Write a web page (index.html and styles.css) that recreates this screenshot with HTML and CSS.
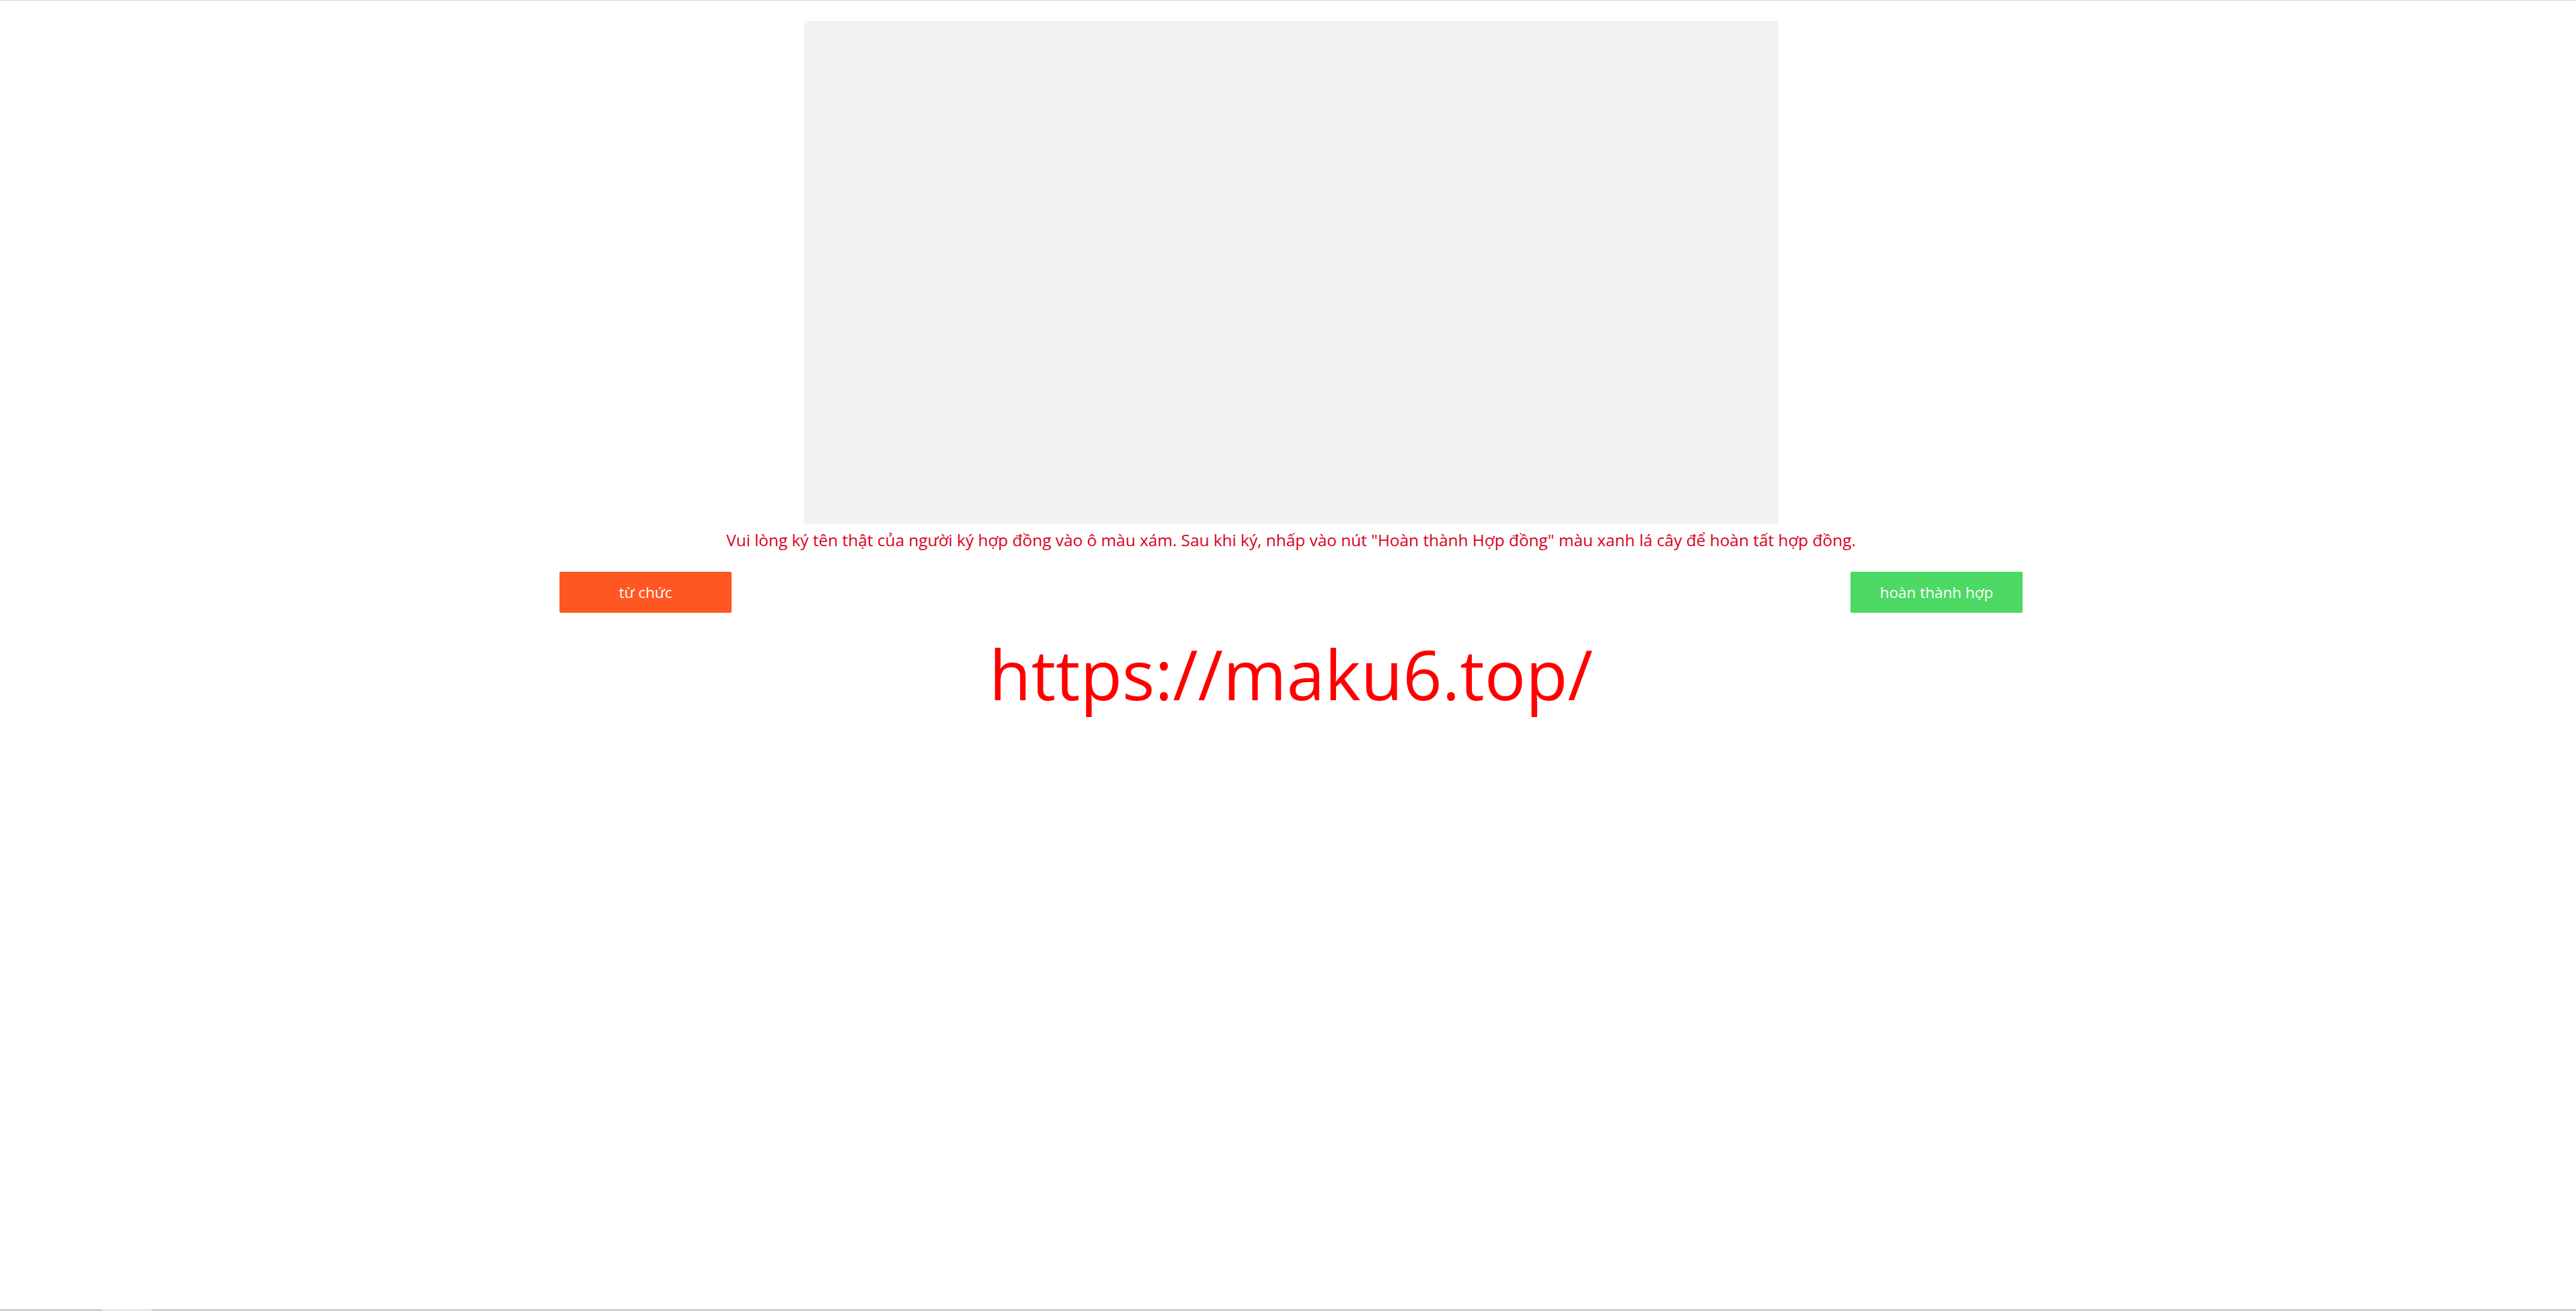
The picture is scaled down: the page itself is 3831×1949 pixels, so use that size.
FILE: index.html
```html
<!DOCTYPE html>
<html lang="vi">
<head>
<meta charset="utf-8">
<title>Ký hợp đồng</title>
<link rel="stylesheet" href="styles.css">
</head>
<body>
<div class="page">
  <main class="content">
    <div class="sign-pad"></div>
    <p class="hint">Vui lòng ký tên thật của người ký hợp đồng vào ô màu xám. Sau khi ký, nhấp vào nút "Hoàn thành Hợp đồng" màu xanh lá cây để hoàn tất hợp đồng.</p>
    <div class="actions">
      <button class="btn btn-cancel" type="button">từ chức</button>
      <button class="btn btn-done" type="button">hoàn thành hợp</button>
    </div>
    <div class="url">https://maku6.top/</div>
  </main>
  <div class="bottom-bar"><span class="thumb"></span></div>
</div>
</body>
</html>
```
FILE: styles.css
```css
html, body {
  margin: 0;
  padding: 0;
  background: #ffffff;
}
.page {
  height: 100vh;
  display: flex;
  flex-direction: column;
  border-top: 1px solid #d4d4d4;
  box-sizing: border-box;
  font-family: "Open Sans", "Noto Sans", sans-serif;
}
.content {
  flex: 1;
  width: 2176px;
  margin-left: 832px;
  display: flex;
  flex-direction: column;
  align-items: center;
}
.sign-pad {
  width: 1449px;
  height: 748px;
  margin-top: 30px;
  background: #f2f2f2;
}
.hint {
  margin: 8px 0 0;
  font-size: 24.4px;
  line-height: 32px;
  color: #d9001b;
  white-space: nowrap;
}
.actions {
  align-self: stretch;
  display: flex;
  justify-content: space-between;
  margin-top: 31px;
}
.btn {
  width: 256px;
  height: 61px;
  border: 0;
  border-radius: 2px;
  color: #ffffff;
  font-family: "Open Sans", "Noto Sans", sans-serif;
  font-size: 22.5px;
  padding: 0;
}
.btn-cancel { background: #ff5722; }
.btn-done { background: #4cd964; }
.url {
  margin-top: 23px;
  font-size: 102px;
  line-height: 136px;
  color: #ff0000;
}
.bottom-bar {
  height: 3px;
  background: #cfcfd6;
  position: relative;
}
.thumb {
  position: absolute;
  left: 152px;
  top: 0;
  width: 73px;
  height: 3px;
  background: #e8e8ea;
}
```
